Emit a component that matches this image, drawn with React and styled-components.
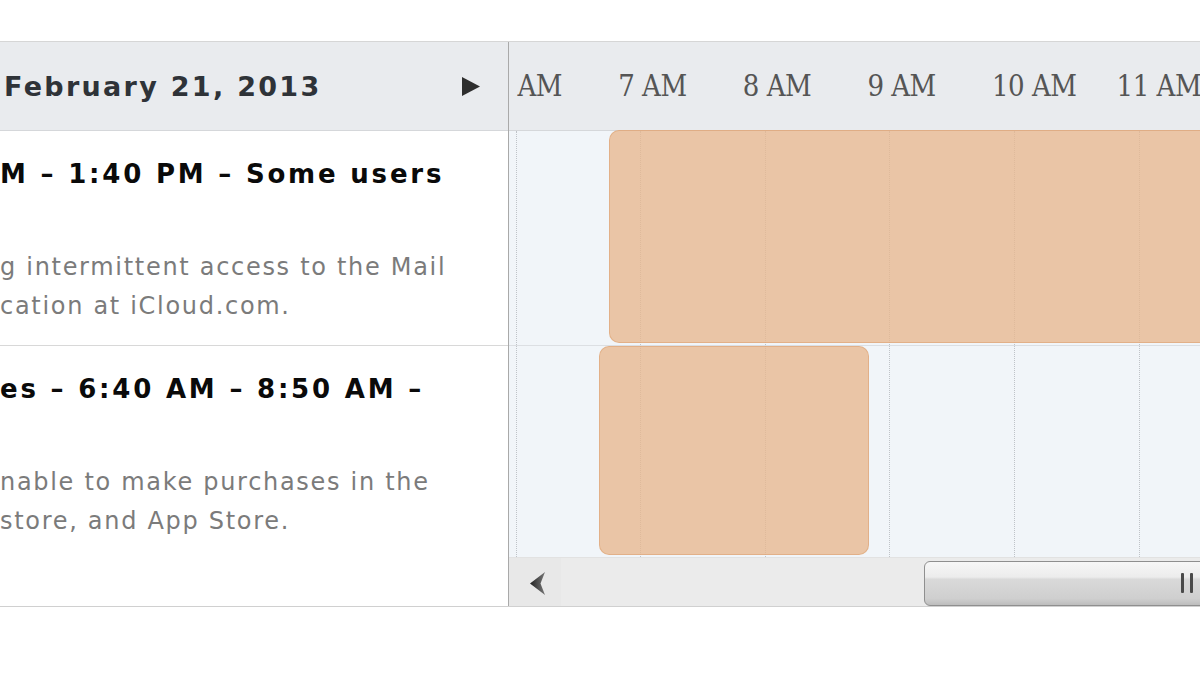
import styled, { createGlobalStyle } from "styled-components";

const GlobalStyle = createGlobalStyle`
  html, body {
    margin: 0;
    padding: 0;
    background: #ffffff;
    overflow: hidden;
  }
`;

const HOUR_WIDTH = 124.6;
const FIRST_HOUR = 5;
const SCROLL_OFFSET = 118;
const LABEL_SHIFT = 22;
const HEADER_INSET = 5;

const hours = [5, 6, 7, 8, 9, 10, 11, 12, 13, 14];

const incidents = [
  {
    title: "M – 1:40 PM – Some users",
    desc: ["g intermittent access to the Mail", "cation at iCloud.com."],
    start: 6.75,
    end: 13.667,
  },
  {
    title: "es – 6:40 AM – 8:50 AM –",
    desc: ["nable to make purchases in the", "store, and App Store."],
    start: 6.667,
    end: 8.833,
  },
];

const Page = styled.div`
  padding-top: 41px;
  width: 1200px;
`;

const Frame = styled.div`
  display: grid;
  grid-template-columns: 508px 1fr;
  height: 564px;
  border-top: 1px solid #d6d6d6;
  border-bottom: 1px solid #d0d0d0;
  overflow: hidden;
`;

const ListPane = styled.div`
  display: flex;
  flex-direction: column;
  background: #ffffff;
  overflow: hidden;
`;

const ListHeader = styled.div`
  height: 88px;
  flex-shrink: 0;
  display: flex;
  align-items: center;
  justify-content: space-between;
  padding: 0 28px 0 4px;
  background: #e9ebee;
  border-bottom: 1px solid #d5d7da;
`;

const DateTitle = styled.div`
  font-family: "DejaVu Sans", Verdana, sans-serif;
  font-weight: bold;
  font-size: 27px;
  letter-spacing: 2.3px;
  color: #2f3338;
  white-space: nowrap;
`;

const ListRow = styled.div`
  height: ${(p) => p.$height}px;
  flex-shrink: 0;
  padding-top: 21px;
  box-sizing: border-box;
  border-bottom: ${(p) => (p.$last ? "none" : "1px solid #d8d8d8")};
  font-family: "DejaVu Sans", Verdana, sans-serif;
  white-space: nowrap;
`;

const RowTitle = styled.div`
  height: 96px;
  line-height: 44px;
  font-weight: bold;
  font-size: 26px;
  letter-spacing: 2.8px;
  color: #0a0a0a;
`;

const RowDesc = styled.div`
  line-height: 39px;
  font-size: 24px;
  letter-spacing: 1.7px;
  color: #7b7b7b;
`;

const TimelinePane = styled.div`
  display: flex;
  flex-direction: column;
  border-left: 1px solid #a9a9a9;
  box-shadow: inset 3px 0 2px -1px #d6d6d6;
  overflow: hidden;
`;

const TimeHeader = styled.div`
  height: 88px;
  flex-shrink: 0;
  padding-left: ${HEADER_INSET}px;
  background: #e9ebee;
  border-bottom: 1px solid #d5d7da;
`;

const HourStrip = styled.div`
  height: 100%;
  overflow: hidden;
`;

const HourRow = styled.div`
  height: 100%;
  display: flex;
  align-items: center;
  margin-left: ${-SCROLL_OFFSET - LABEL_SHIFT - HEADER_INSET}px;
`;

const HourLabel = styled.div`
  width: ${HOUR_WIDTH}px;
  flex-shrink: 0;
  font-family: "DejaVu Serif Condensed", "DejaVu Serif", serif;
  font-stretch: condensed;
  font-size: 29px;
  letter-spacing: -0.5px;
  color: #555;
  white-space: nowrap;
`;

const TimeRow = styled.div`
  height: ${(p) => p.$height}px;
  flex-shrink: 0;
  background: #f1f5f9;
  border-bottom: ${(p) => (p.$last ? "none" : "1px solid #dcdfe3")};
  box-sizing: border-box;
`;

const Track = styled.div`
  position: relative;
  display: flex;
  height: 100%;
  margin-left: ${-SCROLL_OFFSET}px;
`;

const HourCell = styled.div`
  width: ${HOUR_WIDTH}px;
  flex-shrink: 0;
  border-left: 1px dotted #bfc3c8;
  box-sizing: border-box;
`;

const Bar = styled.div`
  position: absolute;
  top: ${(p) => p.$top}px;
  bottom: 2px;
  background: rgba(232, 183, 142, 0.78);
  border: 1px solid rgba(218, 160, 112, 0.55);
  border-radius: 10px;
  box-sizing: border-box;
`;

const ScrollBar = styled.div`
  height: 50px;
  flex-shrink: 0;
  display: flex;
  align-items: center;
  background: #ebebeb;
  border-top: 1px solid #e2e2e2;
`;

const ArrowButton = styled.div`
  width: 52px;
  height: 100%;
  display: flex;
  align-items: center;
  justify-content: center;
  padding-left: 4px;
  box-sizing: border-box;
  background: #e8e8e8;
`;

const ScrollTrack = styled.div`
  flex: 1;
  height: 100%;
  display: flex;
  align-items: center;
  padding-left: 363px;
`;

const Thumb = styled.div`
  flex: 1;
  height: 45px;
  margin-right: -20px;
  display: flex;
  align-items: center;
  gap: 6px;
  padding-left: 256px;
  border: 1px solid #8f8f8f;
  border-radius: 6px;
  box-sizing: border-box;
  background: linear-gradient(
    to bottom,
    #f7f7f7 0%,
    #ececec 35%,
    #d9d9d9 40%,
    #cfcfcf 85%,
    #bdbdbd 100%
  );
`;

const Grip = styled.div`
  width: 3px;
  height: 20px;
  background: #4a4a4a;
  border-radius: 1px;
`;

const barLeft = (t) => (t - FIRST_HOUR) * HOUR_WIDTH;

const formatHour = (h) => {
  const suffix = h >= 12 ? "PM" : "AM";
  const v = h > 12 ? h - 12 : h;
  return `${v} ${suffix}`;
};

const App = () => {
  return (
    <Page>
      <GlobalStyle />
      <Frame>
        <ListPane>
          <ListHeader>
            <DateTitle>February 21, 2013</DateTitle>
            <svg width="18" height="19" viewBox="0 0 18 19">
              <polygon points="0,0 18,9.5 0,19" fill="#2e2e2e" />
            </svg>
          </ListHeader>
          {incidents.map((inc, i) => (
            <ListRow
              key={i}
              $height={i === incidents.length - 1 ? 261 : 215}
              $last={i === incidents.length - 1}
            >
              <RowTitle>{inc.title}</RowTitle>
              {inc.desc.map((line, j) => (
                <RowDesc key={j}>{line}</RowDesc>
              ))}
            </ListRow>
          ))}
        </ListPane>

        <TimelinePane>
          <TimeHeader>
            <HourStrip>
              <HourRow>
                {hours.map((h) => (
                  <HourLabel key={h}>{formatHour(h)}</HourLabel>
                ))}
              </HourRow>
            </HourStrip>
          </TimeHeader>
          {incidents.map((inc, i) => (
            <TimeRow
              key={i}
              $height={i === 0 ? 215 : 211}
              $last={i === incidents.length - 1}
            >
              <Track>
                {hours.map((h) => (
                  <HourCell key={h} />
                ))}
                <Bar
                  $top={i === 0 ? -1 : 0}
                  style={{
                    left: barLeft(inc.start),
                    width: barLeft(inc.end) - barLeft(inc.start),
                  }}
                />
              </Track>
            </TimeRow>
          ))}
          <ScrollBar>
            <ArrowButton>
              <svg width="15" height="23" viewBox="0 0 15 23">
                <defs>
                  <linearGradient id="arr" x1="0" y1="0" x2="1" y2="0">
                    <stop offset="0" stopColor="#222" />
                    <stop offset="1" stopColor="#777" />
                  </linearGradient>
                </defs>
                <polygon points="0,11.5 15,0 10.5,11.5 15,23" fill="url(#arr)" />
              </svg>
            </ArrowButton>
            <ScrollTrack>
              <Thumb>
                <Grip />
                <Grip />
              </Thumb>
            </ScrollTrack>
          </ScrollBar>
        </TimelinePane>
      </Frame>
    </Page>
  );
};

export default App;
